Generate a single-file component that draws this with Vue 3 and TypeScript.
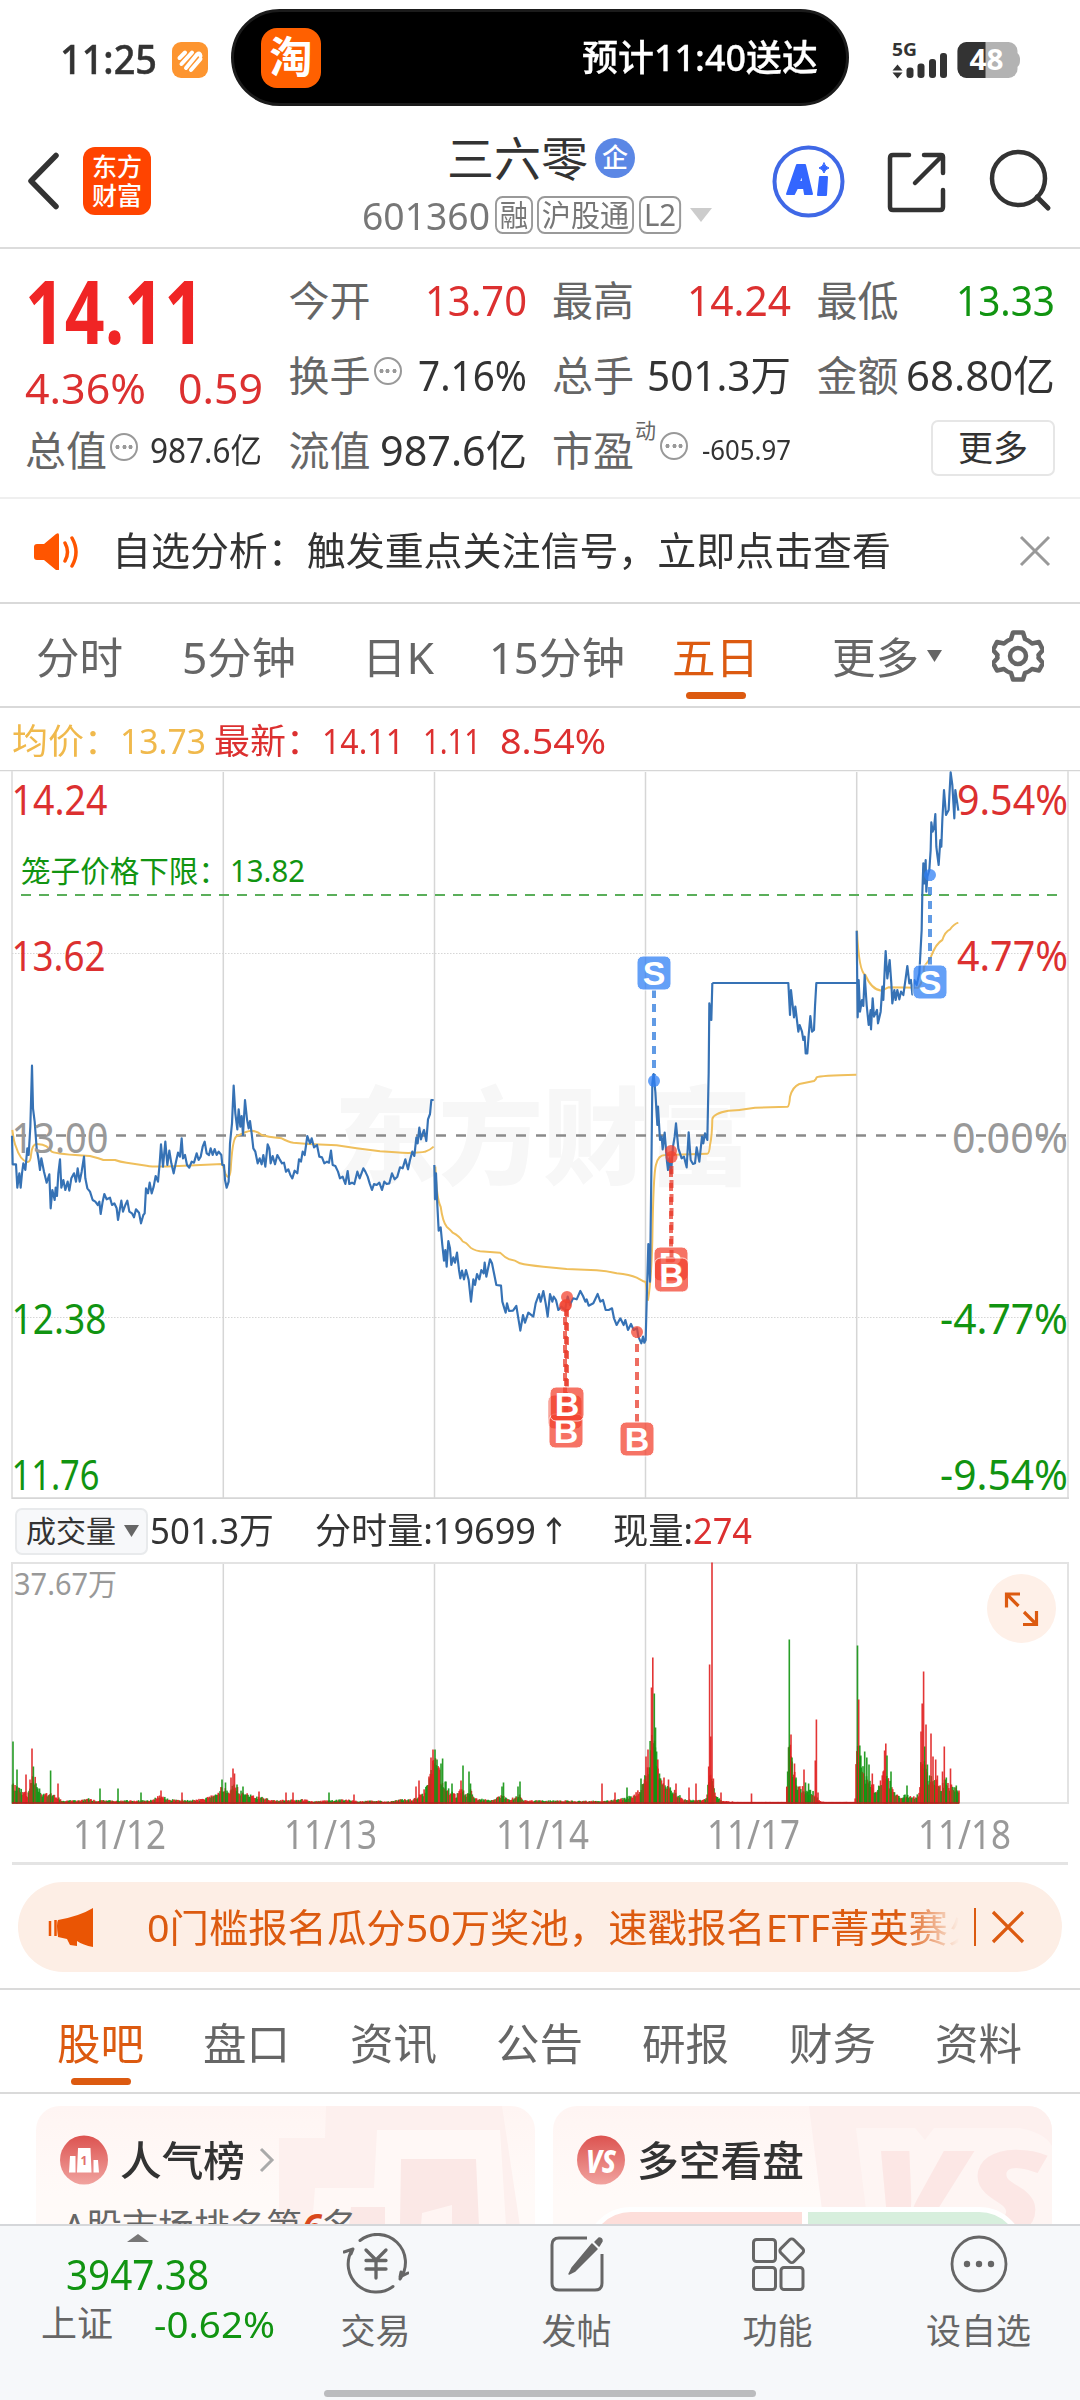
<script setup lang="ts">
import { nextTick, type Directive } from 'vue'

// Condenses or widens a run of text so that it fills the given width in px.
const vFit: Directive<HTMLElement, number> = {
  mounted(el, binding) {
    void nextTick(() => {
      const natural = el.getBoundingClientRect().width
      if (!natural) return
      el.style.transform = `scaleX(${binding.value / natural})`
      el.style.marginRight = `${binding.value - natural}px`
    })
  },
}

interface Axis { y: number; left: string; right: string; tone: string; lw: number; rw: number }
const axis: Axis[] = [
  { y: 814.5, left: '14.24', right: '9.54%', tone: 'up', lw: 93, rw: 109 },
  { y: 970.5, left: '13.62', right: '4.77%', tone: 'up', lw: 91, rw: 109 },
  { y: 1152.5, left: '13.00', right: '0.00%', tone: 'flat', lw: 94, rw: 114 },
  { y: 1334, left: '12.38', right: '-4.77%', tone: 'down', lw: 92, rw: 126 },
  { y: 1489.5, left: '11.76', right: '-9.54%', tone: 'down', lw: 85, rw: 126 },
]

interface Series { shift: string; price: string; mean: string }
// Coordinates are in thirds of a pixel, each session group has its own origin.
const sessions: Series[] = [
  {
    shift: 'translate(0 760) scale(.33333)',
    price:
      'M36 1127 38 1213 48 1213 52 1283 58 1240 62 1283 66 1240 70 1210 76 1230 82 1165 86 1185 91 1100 96 917 99 1045 104 1085 110 1165 116 1200 120 1230 124 1195 132 1235 140 1268 148 1243 152 1345 157 1290 164 1320 167 1283 171 1308 175 1240 180 1198 184 1283 190 1260 196 1290 203 1265 208 1292 214 1255 222 1240 228 1265 233 1225 239 1265 245 1235 252 1190 256 1255 262 1285 270 1295 278 1320 286 1325 293 1335 298 1325 302 1362 308 1325 313 1302 320 1318 330 1313 336 1335 343 1330 350 1345 354 1380 360 1345 364 1322 369 1355 376 1335 382 1322 388 1355 396 1360 402 1372 408 1348 417 1358 423 1390 430 1365 434 1360 438 1285 444 1300 449 1268 455 1300 461 1280 467 1248 474 1265 479 1210 483 1153 489 1220 496 1145 502 1215 508 1172 514 1210 521 1240 528 1205 534 1178 540 1190 545 1135 549 1195 555 1185 561 1215 568 1223 575 1205 582 1208 590 1180 596 1200 602 1190 608 1160 614 1145 620 1180 627 1185 632 1165 638 1185 644 1167 650 1185 656 1175 664 1185 667 1215 672 1215 675 1260 680 1283 686 1265 690 1150 696 1090 701 977 706 1060 712 1108 716 1048 721 1100 725 1068 729 1125 735 1020 741 1078 746 1105 750 1083 755 1120 760 1165 766 1175 773 1210 779 1195 785 1213 790 1185 796 1220 803 1153 808 1165 812 1210 818 1188 825 1213 832 1185 839 1198 846 1210 852 1208 858 1235 865 1228 871 1245 877 1255 884 1232 892 1240 897 1198 903 1205 908 1175 914 1185 922 1128 930 1150 935 1135 942 1162 951 1155 958 1190 966 1192 973 1210 981 1205 987 1208 993 1172 998 1215 1006 1218 1014 1235 1020 1255 1028 1250 1036 1272 1043 1233 1048 1272 1056 1268 1063 1272 1072 1235 1079 1255 1090 1225 1096 1235 1103 1250 1109 1270 1116 1290 1122 1272 1130 1275 1138 1268 1146 1290 1153 1265 1160 1272 1168 1270 1176 1240 1184 1258 1192 1250 1200 1222 1208 1225 1216 1198 1224 1228 1230 1200 1237 1175 1243 1188 1249 1133 1253 1150 1258 1103 1263 1138 1268 1120 1272 1110 1279 1143 1284 1078 1290 1062 1294 1020 1301 1020',
    mean:
      'M37 1110Q42 1150 48 1160Q60 1200 82 1206Q92 1206 93 1185Q96 1150 112 1152C138 1153 145 1162 155 1175C170 1182 230 1186 270 1188Q300 1196 310 1200L345 1200Q360 1206 380 1208L440 1217Q460 1221 520 1219L667 1212L676 1240Q688 1266 692 1230Q697 1140 708 1130Q740 1112 755 1112Q772 1114 785 1125Q800 1130 845 1135Q865 1146 880 1148L925 1152L1010 1156L1070 1165L1140 1174Q1190 1178 1225 1179Q1265 1178 1275 1175Q1290 1171 1301 1160',
  },
  {
    shift: 'translate(420 940) scale(.33333)',
    price:
      'M43 675 45 778 48 700 52 795 56 872 62 862 67 915 72 962 76 930 80 980 85 903 90 925 94 975 100 952 105 968 111 938 117 990 121 1015 126 992 132 1018 138 990 146 1020 153 1085 160 1018 165 1035 171 1002 178 1018 184 990 191 1000 194 968 199 1010 210 958 216 970 222 1000 229 1035 243 1037 247 1085 253 1105 257 1118 261 1090 267 1113 279 1112 289 1098 295 1135 301 1172 309 1125 315 1148 325 1118 340 1130 347 1090 357 1062 362 1085 370 1053 377 1090 383 1130 390 1062 397 1085 401 1070 408 1080 415 1110 424 1100 435 1110 443 1070 450 1095 459 1075 470 1078 481 1053 489 1068 496 1085 500 1078 506 1097 520 1090 533 1062 541 1085 549 1080 557 1110 566 1110 576 1105 582 1135 590 1155 601 1135 611 1155 616 1140 624 1170 633 1152 641 1170 651 1165 655 1190 664 1210 669 1190 673 1208 677 1200 681 1050 685 912 690 1025 694 700 697 430 701 402 706 455 712 555 714 500 720 600 725 590 728 628 734 578 741 665 744 690 748 655 753 700 759 620 764 590 768 550 775 625 785 655 792 650 800 682 806 577 812 660 819 672 825 670 830 622 838 665 846 590 850 610 855 580 862 600 866 400 868 190 874 240 877 129',
    mean:
      'M46 680Q50 780 62 800Q68 845 80 860Q92 870 98 878Q118 888 128 904Q140 908 147 918Q156 930 180 934L240 938Q255 953 268 958Q285 960 300 970Q320 976 370 980L440 987L530 991Q560 993 590 1000Q630 1004 650 1013L668 1023 677 1026L684 1080Q694 1020 697 900Q700 700 708 674Q715 645 735 645L862 641Q868 641 870 615Q876 590 877 537Q880 520 925 512L960 510',
  },
  {
    shift: 'translate(640 760) scale(.33333)',
    price:
      'M217 669 H445 L450 765 453 690 462 772 466 740 475 815 479 795 486 815 490 840 494 830 497 880 502 880 506 825 511 768 516 815 522 810 525 740 529 669 H650 M650 512 653 772 656 660 660 755 666 720 670 738 674 645 680 735 686 795 692 750 693 808 698 715 702 770 711 750 714 790 722 755 727 680 730 720 735 610 737 573 742 655 749 600 754 670 757 730 763 690 767 720 772 690 778 718 783 695 790 705 797 655 802 618 808 670 813 660 817 703 823 660 830 675 838 640 845 510 847 400 850 310 853 370 857 300 859 395 862 350 868 330 872 270 874 187 878 215 882 205 886 162 889 260 892 285 896 315 901 240 904 260 907 180 912 90 918 165 926 150 928 110 932 37 937 75 943 175 946 90 955 152',
    mean:
      'M298 1050L345 1043L443 1040Q448 1038 450 1010Q458 980 478 972L522 963Q528 960 530 952Q540 946 649 944M651 512C655 600 665 640 676 645Q695 690 725 692L745 682 835 683Q852 660 852 620Q868 600 873 590Q888 550 907 540Q915 515 930 508Q942 492 955 488',
  },
]

const columns = [223.3, 434.5, 645.5, 856.7]

interface Marker { kind: 'B' | 'S'; x: number; y: number; dot: number; bare?: boolean }
const markers: Marker[] = [
  { kind: 'S', x: 654, y: 973, dot: 1081 },
  { kind: 'S', x: 930, y: 982, dot: 875 },
  { kind: 'B', x: 671, y: 1264, dot: 1151 },
  { kind: 'B', x: 671.5, y: 1275, dot: 1157 },
  { kind: 'B', x: 565, y: 1412, dot: 1306, bare: true },
  { kind: 'B', x: 566, y: 1431, dot: 1305 },
  { kind: 'B', x: 567, y: 1404, dot: 1297 },
  { kind: 'B', x: 637, y: 1439, dot: 1332 },
]
const stemStart = (m: Marker) => (m.y < m.dot ? m.y + 17 : m.y - 17)

interface Bar { x: number; h: number; up: boolean }
// Background turnover level along the axis: [x, height].
const level: [number, number][] = [
  [12, 22], [18, 15], [24, 12], [27, 9], [30, 16], [34, 28], [38, 18], [42, 9], [50, 10], [58, 6], [62, 3], [80, 3], [88, 5], [95, 3], [150, 3],
  [160, 8], [170, 4], [190, 3], [205, 5], [214, 9], [220, 14], [224, 17], [228, 10], [234, 18], [240, 12], [250, 8], [262, 6], [275, 3],
  [305, 4], [312, 2], [330, 3], [345, 4], [360, 2], [372, 3], [390, 2], [400, 4], [412, 4], [422, 9], [429, 20], [434, 50], [438, 34],
  [444, 22], [450, 12], [456, 8], [462, 16], [466, 7], [470, 13], [476, 5], [492, 3], [502, 8], [508, 4], [520, 8], [524, 3], [590, 2.5],
  [610, 3], [622, 5], [634, 8], [642, 16], [648, 34], [652, 90], [655, 60], [658, 36], [662, 18], [670, 16], [678, 9], [684, 4], [706, 4],
  [710, 30], [713, 20], [716, 8], [722, 3], [732, 2], [735, 1.5], [786, 1.5], [789, 60], [792, 40], [796, 22], [804, 14], [814, 11],
  [819, 3], [824, 1.5], [855, 1.5], [857, 70], [861, 38], [866, 28], [871, 20], [877, 13], [884, 32], [888, 24], [895, 10], [900, 6],
  [907, 9], [912, 6], [919, 9], [922, 60], [926, 42], [929, 26], [935, 25], [940, 16], [945, 24], [950, 18], [956, 15], [960, 10],
]
const peaks: [number, number, 0 | 1][] = [
  [13, 62, 0], [17, 34, 0], [26, 29, 1], [30, 24, 1], [32, 55, 1], [33.4, 37, 0], [50.6, 33, 0], [58, 20, 1], [100, 15, 0], [118, 15, 0],
  [141, 11, 0], [161, 13, 1], [182, 11, 1], [222, 24, 0], [225.5, 21, 0], [231, 26, 1], [233, 35, 1], [234.5, 30, 1], [237, 19, 0],
  [243, 17, 0], [259, 12, 1], [286, 11, 1], [293, 11, 1], [329, 11, 0], [354, 9, 1], [416, 17, 1], [419, 23, 1], [429, 27, 1], [431, 46, 1],
  [433, 54, 1], [435, 54, 0], [437, 44, 0], [441, 40, 0], [442.6, 45, 0], [446, 22, 0], [452, 20, 0], [461, 23, 1], [463, 38, 0],
  [469, 32, 0], [470.5, 20, 0], [502, 17, 0], [503.5, 21, 0], [518, 17, 0], [520, 22, 0], [602, 20, 1], [615, 11, 1], [627, 16, 0],
  [641, 25, 0], [644.5, 24, 1], [646, 47, 1], [648, 54, 1], [651.5, 116, 1], [652.8, 146, 1], [654.3, 110, 0], [655.5, 76, 0],
  [656.6, 52, 0], [657.8, 44, 1], [659.5, 30, 0], [664, 26, 1], [668.5, 24, 1], [676, 20, 1], [689, 16, 1], [696, 20, 1], [708.7, 37, 1],
  [709.6, 139, 1], [710.8, 67, 1], [712, 241, 1], [713.4, 25, 1], [721, 11, 1], [751.5, 10, 1], [787, 17, 1], [789.3, 164, 0], [791, 69, 1],
  [792, 46, 0], [794.5, 40, 1], [796, 26, 0], [804, 34, 1], [805.5, 21, 0], [808.6, 20, 0], [815.3, 43, 1], [816.4, 84, 1], [818, 11, 1],
  [857.5, 158, 0], [858.7, 104, 1], [859.8, 58, 0], [860.8, 48, 0], [864.7, 52, 0], [866.8, 46, 0], [869, 39, 0], [872.3, 30, 1],
  [884.6, 53, 1], [885.8, 60, 1], [887, 48, 0], [891, 32, 0], [907, 18, 0], [921, 72, 1], [922.2, 100, 1], [923.6, 132, 1], [924.8, 57, 0],
  [926, 79, 1], [927.4, 39, 0], [931, 70, 1], [933, 47, 1], [935.7, 44, 1], [937.4, 28, 1], [942.5, 32, 1], [944.3, 57, 1],
  [946.3, 26, 0], [950.5, 35, 1], [956.3, 18, 0], [959, 13, 1],
]
function levelAt(x: number): number {
  for (let i = 1; i < level.length; i++) {
    const [x1, h1] = level[i]
    const [x0, h0] = level[i - 1]
    if (x <= x1) return h0 + ((h1 - h0) * (x - x0)) / (x1 - x0)
  }
  return 0
}
function makeBars(): Bar[] {
  const out: Bar[] = []
  let seed = 601360
  for (let x = 12.4; x < 959; x += 0.876) {
    seed = (seed * 1103515245 + 12345) % 2147483648
    const r = seed / 2147483648
    seed = (seed * 1103515245 + 12345) % 2147483648
    const quiet = (x > 722 && x < 787) || (x > 820 && x < 857)
    out.push({ x, h: Math.max(1.6, levelAt(x) * (0.65 + r * 0.5)), up: quiet || seed / 2147483648 > 0.48 })
  }
  for (const [x, h, up] of peaks) out.push({ x, h, up: up === 1 })
  return out
}
const bars = makeBars()

const dates = ['11/12', '11/13', '11/14', '11/17', '11/18']
const periods = [
  { label: '分时', w: 87 },
  { label: '5分钟', w: 114 },
  { label: '日K', w: 72 },
  { label: '15分钟', w: 136 },
  { label: '五日', w: 87 },
]
const sections = ['股吧', '盘口', '资讯', '公告', '研报', '财务', '资料']
</script>

<template>
  <div class="page" lang="zh-CN">
    <header class="status">
      <span v-fit="97" class="clock t">11:25</span>
      <svg class="chip" width="36" height="36" viewBox="0 0 36 36">
        <rect width="36" height="36" rx="9" fill="#fd9530" />
        <g stroke="#fff" stroke-linecap="round" stroke-linejoin="round" fill="none">
          <path d="M7.500 16 13 10.500M9.500 22 20 10.500M14 26 25 12.500Q28 10 28.500 14M19 28 28.500 17" stroke-width="4" />
        </g>
      </svg>
      <div class="island">
        <div class="tao">淘</div>
        <span v-fit="236" class="eta t">预计11:40送达</span>
      </div>
      <svg class="signal" width="130" height="44" viewBox="890 38 130 44">
        <text x="892" y="55.500" font-size="18" font-weight="700" textLength="25" lengthAdjust="spacingAndGlyphs" fill="#333">5G</text>
        <path d="M892.500 70.500 897.500 64.500 902.500 70.500ZM892.500 72.500 897.500 78.500 902.500 72.500Z" fill="#333" />
        <g fill="#333">
          <rect x="906.500" y="67.500" width="7" height="10.500" rx="3" />
          <rect x="917.500" y="63.500" width="7" height="14.500" rx="3" />
          <rect x="929" y="59" width="7" height="19" rx="3" />
          <rect x="940" y="53" width="7" height="25" rx="3" />
        </g>
        <path d="M1010 53h7q3 1.500 3 7t-3 7h-7z" fill="#b3b3b3" />
        <rect x="957.500" y="42" width="60" height="36" rx="9" fill="#b3b3b3" />
        <path d="M985.500 42h-19a9 9 0 0 0-9 9v18a9 9 0 0 0 9 9h19z" fill="#333" />
        <text x="969.500" y="70" font-size="28" font-weight="700" textLength="34" lengthAdjust="spacingAndGlyphs" fill="#fff">48</text>
      </svg>
    </header>

    <nav class="bar">
      <svg class="back" width="34" height="58" viewBox="0 0 34 58" fill="none" stroke="#333" stroke-width="5.500" stroke-linecap="round" stroke-linejoin="round">
        <path d="M30 3.500 5 29 30 54.500" />
      </svg>
      <div class="brand"><span>东方</span><span>财富</span></div>
      <div class="title">
        <div class="name">
          <span>三六零</span>
          <i class="ent">企</i>
        </div>
        <div class="code">
          <span v-fit="128" class="t">601360</span>
          <b v-fit="38">融</b><b v-fit="97">沪股通</b><b v-fit="42">L2</b>
          <svg width="22" height="14" viewBox="0 0 22 14"><path d="M0 0h22L11 14z" fill="#ccc" /></svg>
        </div>
      </div>
      <svg class="tools" width="290" height="76" viewBox="770 143 290 76" fill="none" stroke="#333" stroke-width="4.500" stroke-linecap="round" stroke-linejoin="round">
        <circle cx="808.500" cy="181.500" r="34" stroke="#3f68e6" stroke-width="4" />
        <g fill="#3366ff" stroke="#3366ff" stroke-width="2">
          <path fill-rule="evenodd" d="M797 165h8l7 29h-7l-1-6h-7l-3 6h-7zM802 173l-3 9h4z" />
          <path d="M820 177h7l-1 18h-8z" />
          <path d="M824 163q1 4 5 5q-4 1-5 5q-1-4-5-5q4-1 5-5z" stroke-width="1" />
        </g>
        <path d="M909 155h-16q-3 0-3 3v49q0 3 3 3h47q3 0 3-3v-17M924 155h17q2 0 2 2v16M941 157 915 183" />
        <circle cx="1018.500" cy="178.500" r="26.500" />
        <path d="M1037 197 1048 208" stroke-width="5" />
      </svg>
    </nav>

    <section class="quote">
      <div class="last">
        <span v-fit="179" class="big t">14.11</span>
        <p><span v-fit="121" class="t">4.36%</span><span v-fit="85" class="t">0.59</span></p>
        <p class="row3"><em>总值</em><i class="more"></i><span v-fit="112" class="t sm">987.6亿</span></p>
      </div>
      <div class="col">
        <p><em>今开</em><span v-fit="102" class="t up">13.70</span></p>
        <p><em>换手</em><i class="more"></i><span v-fit="109" class="t">7.16%</span></p>
        <p><em>流值</em><span v-fit="147" class="t">987.6亿</span></p>
      </div>
      <div class="col">
        <p><em>最高</em><span v-fit="104" class="t up">14.24</span></p>
        <p><em>总手</em><span v-fit="144" class="t">501.3万</span></p>
        <p><em>市盈</em><sup>动</sup><i class="more"></i><span v-fit="89" class="t xs">-605.97</span></p>
      </div>
      <div class="col">
        <p><em>最低</em><span v-fit="99" class="t down">13.33</span></p>
        <p><em>金额</em><span v-fit="149" class="t">68.80亿</span></p>
        <p><button>更多</button></p>
      </div>
    </section>

    <section class="notice">
      <svg width="46" height="38" viewBox="33 531 46 38">
        <path d="M37 543h7l12-10q3-2 3 1v34q0 3-3 1l-12-10h-7q-3 0-3-3v-10q0-3 3-3z" fill="#ff5500" />
        <path d="M65 542q5 9 0 18M72 537q8 14 0 28" fill="none" stroke="#ff5500" stroke-width="3.500" stroke-linecap="round" />
      </svg>
      <span v-fit="779" class="t">自选分析：触发重点关注信号，立即点击查看</span>
      <svg width="32" height="32" viewBox="0 0 32 32"><path d="M2 2 30 30M30 2 2 30" stroke="#999" stroke-width="3" /></svg>
    </section>

    <section class="periods">
      <div v-for="p in periods" :key="p.label" class="cell" :class="{ on: p.label === '五日' }">
        <span v-fit="p.w" class="t">{{ p.label }}</span>
      </div>
      <div class="cell drop">
        <span v-fit="87" class="t">更多</span>
        <svg width="15" height="12" viewBox="0 0 15 12"><path d="M0 0h15L7.500 12z" fill="#666" /></svg>
      </div>
      <svg class="gear" width="52" height="54" viewBox="-26 -27 52 54" fill="none" stroke="#666" stroke-width="4.500" stroke-linejoin="round">
        <path d="M-5 -23.500h10l2 6.500q4 1.500 7 4.500l7-1.500 4 8-4.500 5q.5 1 0 3l4.500 5-4 7.500-7-1.500q-3 3-7 4l-2 6.500h-10l-2-6.500q-4-1-7-4l-7 1.500-4-7.500 4.500-5q-.5-2 0-3l-4.500-5 4-8 7 1.500q3-3 7-4.500z" />
        <circle r="8" />
      </svg>
    </section>

    <section class="legend">
      <span v-fit="108" class="t mean">均价：</span><span v-fit="86" class="t mean">13.73</span>
      <span v-fit="108" class="t">最新：</span><span v-fit="82" class="t">14.11</span>
      <span v-fit="58" class="t gap">1.11</span><span v-fit="106" class="t gap">8.54%</span>
    </section>

    <svg class="chart" width="1080" height="729" viewBox="0 770 1080 729">
      <text x="334" y="1176" class="wm" textLength="418" lengthAdjust="spacingAndGlyphs">东方财富</text>
      <g stroke="#d6d6d6" stroke-width="2">
        <path d="M0 770.500H1080" stroke-width="1.500" />
        <path d="M12 771V1499M1068 771V1499" stroke="#e3e3e3" />
        <path v-for="c in columns" :key="c" :d="`M${c} 772V1499`" stroke-width="1.500" />
        <path d="M12 1498.300H1069" />
        <path d="M12 953.500H1068M12 1317.500H1068" stroke-width="1.200" stroke-dasharray="1.500 1.500" />
      </g>
      <path d="M21 895H1058" stroke="#5aae5a" stroke-width="2" stroke-dasharray="10 8" />
      <path d="M16 1135.500H1068" stroke="#8a8a8a" stroke-width="2.500" stroke-dasharray="10 10" />
      <g v-for="s in sessions" :key="s.shift" :transform="s.shift" fill="none" stroke-linejoin="round">
        <path :d="s.mean" stroke="#efbf5c" stroke-width="6" />
        <path :d="s.price" stroke="#3672b5" stroke-width="6.500" />
      </g>
      <g v-for="(m, i) in markers" :key="i" :class="m.kind">
        <g opacity=".74">
          <path :d="`M${m.x} ${stemStart(m)}V${m.dot}`" class="stem" />
          <circle :cx="m.x" :cy="m.dot" r="6" />
          <rect :x="m.x - 17" :y="m.y - 17" width="34" height="34" rx="6" class="tag" />
        </g>
        <text v-if="!m.bare" :x="m.x" :y="m.y + 12" class="letter">{{ m.kind }}</text>
      </g>
      <text x="21" y="882" class="cage" textLength="207" lengthAdjust="spacingAndGlyphs">笼子价格下限：</text>
      <text x="230" y="882" class="cage" textLength="75" lengthAdjust="spacingAndGlyphs">13.82</text>
      <g v-for="a in axis" :key="a.left" class="axis" :class="a.tone">
        <text x="11.500" :y="a.y" :textLength="a.lw + 3" lengthAdjust="spacingAndGlyphs">{{ a.left }}</text>
        <text :x="1066 - a.rw" :y="a.y" :textLength="a.rw + 2" lengthAdjust="spacingAndGlyphs">{{ a.right }}</text>
      </g>
    </svg>

    <section class="volbar">
      <div class="pick">
        <span v-fit="90" class="t">成交量</span>
        <svg width="15" height="12" viewBox="0 0 15 12"><path d="M0 0h15L7.500 12z" fill="#666" /></svg>
      </div>
      <span v-fit="124" class="t v1">501.3万</span>
      <span v-fit="221" class="t v2">分时量:19699</span>
      <svg class="arrow" width="16" height="28" viewBox="0 0 16 28" fill="none" stroke="#333" stroke-width="2.600"><path d="M8 27V3M1.500 9 8 2 14.500 9" /></svg>
      <span v-fit="80" class="t v3">现量:</span><span v-fit="59" class="t up">274</span>
    </section>

    <div class="volume">
      <svg width="1080" height="243" viewBox="0 1562 1080 243">
        <g stroke="#d6d6d6" stroke-width="1.500" fill="none">
          <path d="M12 1563H1068V1803H12z" stroke="#e3e3e3" stroke-width="2" />
          <path v-for="c in columns" :key="c" :d="`M${c} 1564V1803`" />
        </g>
        <rect v-for="(b, i) in bars" :key="i" :x="b.x - 0.800" :y="1803.500 - b.h" width="1.600" :height="b.h" :fill="b.up ? '#e02020' : '#119411'" opacity="0.9" />
        <path d="M12 1803H959" stroke="#b51f1f" stroke-width="1.500" />
        <text x="14" y="1595" class="max" textLength="103" lengthAdjust="spacingAndGlyphs">37.67万</text>
        <circle cx="1021.500" cy="1608.500" r="34.500" fill="#fef0e8" />
        <path d="M1006.500 1610.500V1597h13.500M1007 1597.500 1018.500 1609M1024 1615 1035.500 1626.500M1023 1627.500h13.500V1614" transform="translate(0 -3)" fill="none" stroke="#dc5a10" stroke-width="3.200" />
      </svg>
      <div class="dates">
        <div v-for="d in dates" :key="d"><span v-fit="93" class="t">{{ d }}</span></div>
      </div>
    </div>

    <section class="promo">
      <svg width="46" height="40" viewBox="47 1906 46 40">
        <path d="M93 1907v39q-10-2-16-6v5l-7-1-3-6-9-2q-2-14 0-17 22-4 35-12z" fill="#ea5504" />
        <path d="M50 1920v15M55.500 1919v16" stroke="#ea5504" stroke-width="2.500" />
      </svg>
      <div class="ticker"><span v-fit="801" class="t">0门槛报名瓜分50万奖池，速戳报名ETF菁英赛</span><span>火</span></div>
      <i class="bar2"></i>
      <svg width="34" height="34" viewBox="0 0 34 34"><path d="M2 2 32 32M32 2 2 32" stroke="#dc5a10" stroke-width="3.300" /></svg>
    </section>

    <section class="sections">
      <div v-for="s in sections" :key="s" class="cell" :class="{ on: s === '股吧' }"><span v-fit="87" class="t">{{ s }}</span></div>
    </section>

    <section class="cards">
      <div class="card">
        <svg class="deco" width="260" height="120" viewBox="276 2106 260 120">
          <path d="M326 2106H502L520 2226H279V2138H325z" fill="#fdf0ee" />
          <path d="M377 2130H500L506 2226H312L315 2188H374z" fill="#fff8f6" />
          <path d="M401 2159H476L479 2226H349L351 2207H385V2224H400z" fill="#fbe8e6" />
          <path d="M422 2213 452 2205V2226H421z" fill="#fff5f3" />
        </svg>
        <div class="head">
          <svg width="48" height="50" viewBox="0 0 48 50">
            <defs><linearGradient id="red" x1="0" y1="0" x2="0" y2="1"><stop offset="0" stop-color="#dc5350" /><stop offset="1" stop-color="#f1a39f" /></linearGradient></defs>
            <ellipse cx="24" cy="25" rx="24" ry="24.500" fill="url(#red)" />
            <path d="M10 21h5.500v16.500H9zM18 13h12.500l1 24.500H17zM33.500 25h4.500l1 12.500h-5.500z" fill="#fff" />
            <text x="20.500" y="30" font-size="12" font-weight="700" fill="#e2716e">1</text>
          </svg>
          <span v-fit="125" class="t">人气榜</span>
          <svg class="chev" width="16" height="26" viewBox="0 0 16 26"><path d="M2 2 13 13 2 24" fill="none" stroke="#aaa" stroke-width="3" /></svg>
        </div>
        <p class="rank">A股市场排名第<b>6</b>名</p>
      </div>
      <div class="card">
        <svg class="deco wide" width="250" height="120" viewBox="802 2106 250 120">
          <path d="M809 2106H1052V2226H824z" fill="#fdf0ee" />
          <path d="M856 2128H915L925 2140 934 2128H1020Q1045 2133 1052 2146V2226H868z" fill="#fef5f3" />
          <text x="870" y="2236" class="ghost" textLength="176" lengthAdjust="spacingAndGlyphs">VS</text>
        </svg>
        <div class="head">
          <svg width="48" height="50" viewBox="0 0 48 50">
            <ellipse cx="24" cy="25" rx="24" ry="24.500" fill="url(#red)" />
            <text x="9" y="37.500" font-size="32" font-weight="800" font-style="italic" fill="#fff" textLength="30" lengthAdjust="spacingAndGlyphs">VS</text>
          </svg>
          <span v-fit="167" class="t">多空看盘</span>
        </div>
        <div class="duel"><i></i><i></i></div>
      </div>
    </section>

    <footer class="foot">
      <div class="index">
        <svg width="22" height="8" viewBox="0 0 22 8"><path d="M0 8 11 0 22 8z" fill="#777" /></svg>
        <span v-fit="143" class="t pts">3947.38</span>
        <div><span class="nm">上证</span><span v-fit="121" class="t">-0.62%</span></div>
      </div>
      <div class="item">
        <svg width="66" height="62" viewBox="-33 -31 66 62" fill="none" stroke="#666" stroke-width="3" stroke-linecap="round" stroke-linejoin="round">
          <path d="M-16 -23.500A28 28 0 0 1 24 15M17 22.500A28 28 0 0 1-24-14M-32-12-23-15-25-10M32 9 24 13 25 8" />
          <path d="M-10-14 0-4 10-14M0-4V14M-10-3.500H10M-10 5H10" stroke-width="3.300" />
        </svg>
        <span>交易</span>
      </div>
      <div class="item">
        <svg width="66" height="62" viewBox="-33 -31 66 62" fill="none" stroke="#666" stroke-width="3" stroke-linejoin="round">
          <path d="M10-26H-18Q-25-26-25-19V19Q-25 26-18 26H18Q25 26 25 19V-10" />
          <path d="M15-20 20-15-2 7-8 10-5 4zM18-22 22-26Q25-26 25-23L22-18z" fill="#666" stroke-width="1.500" />
        </svg>
        <span>发帖</span>
      </div>
      <div class="item">
        <svg width="66" height="62" viewBox="-33 -31 66 62" fill="none" stroke="#666" stroke-width="3">
          <rect x="-24.500" y="-24.500" width="22" height="22" rx="3" /><rect x="-24.500" y="3.500" width="22" height="22" rx="3" /><rect x="3" y="3.500" width="22" height="22" rx="3" />
          <rect x="4.500" y="-22.500" width="18.500" height="18.500" rx="3" transform="rotate(45 13.750 -13.250)" />
        </svg>
        <span>功能</span>
      </div>
      <div class="item">
        <svg width="66" height="62" viewBox="-33 -31 66 62" fill="none" stroke="#666" stroke-width="2.800">
          <circle r="27" />
          <g fill="#666" stroke="none"><circle cx="-12" r="3.200" /><circle r="3.200" /><circle cx="12" r="3.200" /></g>
        </svg>
        <span>设自选</span>
      </div>
      <i class="home"></i>
    </footer>
  </div>
</template>

<style>
body {
  margin: 0;
  background: #fff;
}
</style>

<style scoped>
.page {
  width: 1080px;
  height: 2400px;
  overflow: hidden;
  background: #fff;
  color: #333;
  font-family: 'Noto Sans', 'Noto Sans CJK SC', sans-serif;
  display: flex;
  flex-direction: column;
}
.page > * { flex: none; box-sizing: border-box; }
p { margin: 0; }
i, em { font-style: normal; }
svg { display: block; flex: none; }
.t { display: inline-block; white-space: nowrap; transform-origin: 0 50%; flex: none; }
.up { color: #dc3030; }
.down { color: #119411; }

.status { height: 115px; display: flex; align-items: center; padding: 0 0 0 60px; }
.clock { font-size: 40px; font-weight: 500; line-height: 40px; margin-top: 2px; -webkit-text-stroke: 0.5px currentColor; }
.chip { margin: 5px 0 0 15px; }
.island {
  width: 618px; height: 97px; margin: 0 0 0 23px; box-sizing: border-box; border: 3px solid #1b1b1b; border-radius: 49px;
  background: #000; display: flex; align-items: center; justify-content: space-between; padding: 0 28px 0 27px; color: #fff;
}
.tao {
  width: 60px; height: 60px; border-radius: 16px; background: #ff6000; color: #fff; font-size: 43px; font-weight: 700;
  line-height: 58px; text-align: center;
}
.eta { font-size: 36px; font-weight: 500; line-height: 44px; -webkit-text-stroke: 0.3px currentColor; }
.signal { margin: 5px 0 0 41px; }

.bar { height: 134px; border-bottom: 2px solid #dcdcdc; display: flex; align-items: flex-start; padding-left: 26px; }
.back { margin-top: 37px; }
.brand {
  width: 68px; height: 68px; margin: 32px 0 0 23px; border-radius: 12px; background: #ff4400; color: #fff; font-size: 25px;
  line-height: 29px; font-weight: 500; display: flex; flex-direction: column; align-items: center; justify-content: center;
}
.title { width: 352px; margin: 14px 0 0 211px; }
.name { display: flex; align-items: center; padding-left: 85px; height: 58px; font-size: 47px; line-height: 58px; }
.ent {
  width: 40px; height: 40px; margin-left: 7px; border-radius: 50%; background: #5b87e5; color: #fff; font-size: 26px;
  font-weight: 500; line-height: 38px; text-align: center;
}
.code { display: flex; align-items: center; height: 44px; margin-top: 6px; font-size: 38px; line-height: 44px; color: #777; }
.code b {
  box-sizing: border-box; border: 2px solid #999; border-radius: 8px; height: 38px; margin: 0 0 0 4.500px; padding: 0 3px;
  font-weight: 400; font-size: 30px; line-height: 33px; white-space: nowrap; transform-origin: 0 50%;
}
.code svg { margin-left: 9px; }
.tools { margin: 28px 0 0 56px; }

.quote { height: 250px; border-bottom: 2px solid #efefef; padding-left: 25px; display: flex; }
.quote p { display: flex; align-items: center; height: 75px; line-height: 60px; font-size: 42px; }
.quote em { color: #666; font-size: 41px; flex: none; white-space: nowrap; }
.last { width: 238px; margin-right: 26px; color: #dc3030; }
.big { font-size: 88px; font-weight: 700; line-height: 88px; height: 101px; padding-top: 17px; box-sizing: border-box; color: #f02525; }
.last p { justify-content: space-between; height: 75px; }
.last .row3 { color: #333; height: 50px; justify-content: flex-start; }
.row3 .sm { font-size: 34px; margin-left: 12px; }
.col { width: 239px; margin-right: 25px; padding-top: 13px; }
.col p > :last-child { margin-left: auto; }
.xs { font-size: 27px; }
.more { width: 28px; height: 28px; border: 2px solid #999; border-radius: 50%; margin: -7px 0 0 3px; flex: none; box-sizing: border-box; display: flex; background: radial-gradient(circle, #999 1.800px, transparent 2.300px) center / 7px 8px no-repeat, radial-gradient(circle, #999 1.800px, transparent 2.300px) 2px center / 7px 8px no-repeat, radial-gradient(circle, #999 1.800px, transparent 2.300px) 15px center / 7px 8px no-repeat; }
sup { font-size: 21px; line-height: 24px; color: #666; margin: -40px 0 0 1px; width: 23px; }
sup + .more { margin-left: 2px; }
button {
  width: 124px; height: 56px; margin: -4px 0 0 auto; border: 2px solid #e6e6e6; border-radius: 7px; background: #fff; color: #333;
  font: 35px/48px 'Noto Sans', 'Noto Sans CJK SC', sans-serif; padding: 0;
}
.col:last-child { padding-left: 1px; }

.notice { height: 105px; border-bottom: 2px solid #d9d9d9; display: flex; align-items: center; padding: 0 29px 0 33px; font-size: 39px; line-height: 50px; }
.notice .t { margin-left: 33px; margin-top: -1px; }
.notice > :last-child { margin-left: auto; }

.periods { height: 104px; border-bottom: 2px solid #d9d9d9; display: flex; font-size: 43px; color: #666; }
.cell { width: 159px; display: flex; justify-content: center; align-items: center; position: relative; line-height: 60px; padding-top: 5px; box-sizing: border-box; }
.on { color: #dc5a10; }
.on::after { content: ''; position: absolute; left: 50%; bottom: 7px; width: 60px; height: 7px; margin-left: -30px; border-radius: 4px; background: #dc5a10; }
.drop { padding-left: 24px; }
.drop svg { margin: -4px 0 0 8px; }
.gear { margin: 25px 0 0 38px; }

.legend { height: 62px; display: flex; align-items: center; padding: 3px 0 0 12px; font-size: 35px; line-height: 50px; color: #dc3030; }
.mean { color: #f0b94c; }
.legend .t:nth-child(3) { margin-left: 8px; }
.gap { margin-left: 19px; }

.wm { font-size: 106px; font-weight: 900; fill: #f7f7f7; }
.axis text { font-size: 41px; }
.axis.up { fill: #dc3030; }
.axis.flat { fill: #999; }
.axis.down { fill: #119411; }
.cage { font-size: 30px; fill: #119411; }
.S { fill: #2f7ff5; stroke: none; }
.B { fill: #f34330; stroke: none; }
.S .stem { stroke: #2b79dd; }
.B .stem { stroke: #e93b2b; }
.stem { stroke-width: 4; stroke-dasharray: 8 6; }
.tag { stroke: #fff; stroke-width: 1; }
.letter { font: 700 34px 'Liberation Sans', sans-serif; fill: #fff; text-anchor: middle; }

.volbar { height: 63px; display: flex; align-items: center; padding: 1px 0 0 15px; font-size: 36px; line-height: 50px; }
.pick {
  width: 133px; height: 47px; box-sizing: border-box; border: 2px solid #e8eaec; border-radius: 7px; background: #f7f8fa;
  display: flex; align-items: center; padding-left: 9px; font-size: 30px;
}
.pick svg { margin-left: 8px; }
.v1 { margin-left: 2px; }
.v2 { margin-left: 41px; }
.arrow { margin-left: 10px; }
.v3 { margin-left: 51px; }

.volume { height: 303px; }
.max { font-size: 30px; fill: #999; }
.dates { display: flex; margin: 0 12px; height: 60px; box-sizing: border-box; border-bottom: 3px solid #e4e4e4; color: #999; font-size: 40px; line-height: 58px; }
.dates div { flex: 1; display: flex; justify-content: center; padding-left: 4px; }

.promo {
  height: 90px; margin: 17px 18px 16px; border-radius: 46px; background: #fdeee5; display: flex; align-items: center;
  padding-left: 29px; color: #dc5a10; font-size: 39px; line-height: 60px;
}
.ticker {
  width: 812px; margin-left: 54px; overflow: hidden; white-space: nowrap; display: flex;
  -webkit-mask-image: linear-gradient(90deg, #000 93%, transparent 100%);
  mask-image: linear-gradient(90deg, #000 93%, transparent 100%);
}
.bar2 { width: 2px; height: 38px; margin: 0 15px 0 15px; background: #dc5a10; }

.sections { height: 106px; border-top: 2px solid #dadada; border-bottom: 2px solid #dadada; display: flex; padding-left: 27.500px; font-size: 43px; color: #666; }
.sections .cell { width: 146.300px; padding-top: 5px; }

.cards { height: 130px; display: flex; gap: 18px; padding: 12px 0 0 36px; overflow: hidden; }
.card { width: 499px; height: 200px; border-radius: 24px; background: linear-gradient(180deg, #fff5f3, #fffaf8 90px); overflow: hidden; position: relative; }
.deco { position: absolute; top: 0; left: 240px; }
.deco.wide { left: 249px; }
.ghost { font-size: 118px; font-weight: 900; font-style: italic; fill: #fce7e5; }
.head { display: flex; align-items: center; height: 50px; margin: 29px 0 0 24px; font-size: 41px; font-weight: 500; line-height: 50px; position: relative; }
.head .t { margin: -1px 0 0 12px; }
.chev { margin-left: 14px; }
.rank { position: relative; margin: 17px 0 0 27px; font-size: 36px; line-height: 50px; color: #666; }
.rank b { color: #d9481c; font-size: 36px; font-style: italic; line-height: 40px; }
.duel { position: relative; width: 430px; height: 90px; margin: 22px 0 0 32px; border: 5px solid #fff; border-radius: 46px; background: #fff; overflow: hidden; display: flex; gap: 6px; }
.duel i { flex: 1; background: #fddeda; }
.duel i + i { background: #d7efdd; }

.foot { height: 176px; border-top: 2px solid #d5d7da; background: #f6f8fa; display: flex; position: relative; }
.index { width: 275px; color: #119411; }
.index svg { margin: 8px 0 0 127px; }
.pts { font-size: 41px; line-height: 50px; margin: 7px 0 0 66px; }
.index div { display: flex; font-size: 37px; line-height: 46px; padding: 2px 0 0 41px; }
.index .t { flex: none; }
.nm { color: #666; font-size: 36px; width: 113px; }
.item { width: 201px; display: flex; flex-direction: column; align-items: center; padding-top: 7px; color: #666; font-size: 35px; line-height: 50px; }
.item span { margin-top: 11px; }
.home { position: absolute; left: 324px; bottom: 3px; width: 432px; height: 7px; border-radius: 4px; background: #bbbcbe; }
</style>
